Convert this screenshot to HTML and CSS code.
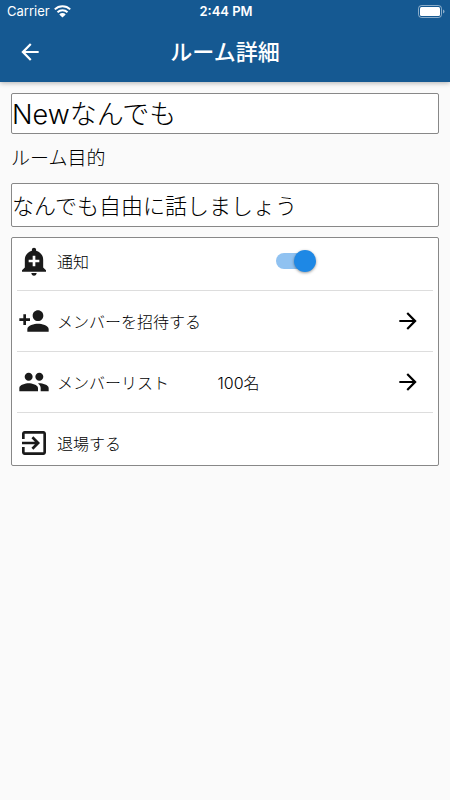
FILE: index.html
```html
<!DOCTYPE html>
<html lang="ja">
<head>
<meta charset="utf-8">
<meta name="viewport" content="width=device-width, initial-scale=1">
<title>ルーム詳細</title>
<link rel="stylesheet" href="styles.css">
</head>
<body>
<header class="top">
  <div class="status">
    <div class="carrier">
      <span>Carrier</span>
      <svg class="wifi" viewBox="0 0 17 13" aria-hidden="true"><path d="M.8 4.4a11 11 0 0 1 15.4 0M3.5 7.2a7.2 7.2 0 0 1 10 0" /><path class="dot" d="M8.500 12.600 5.300 9.400a4.500 4.500 0 0 1 6.400 0z"/></svg>
    </div>
    <span class="time">2:44 PM</span>
    <svg class="battery" viewBox="0 0 27 13" aria-hidden="true"><rect class="shell" x=".5" y=".5" width="23" height="12" rx="3"/><rect x="2" y="2" width="20" height="9" rx="1.500"/><path class="cap" d="M25 4.500v4q1.500-.6 1.500-2t-1.500-2z"/></svg>
  </div>
  <div class="appbar">
    <button class="back" type="button" aria-label="戻る">
      <svg class="arrow" viewBox="0 0 24 24" aria-hidden="true"><path d="M20 11H7.830l5.590-5.590L12 4l-8 8 8 8 1.410-1.410L7.830 13H20v-2z"/></svg>
    </button>
    <h1 class="title">ルーム詳細</h1>
  </div>
</header>
<main class="content">
  <input class="field name" type="text" value="Newなんでも" aria-label="ルーム名">
  <label class="caption" for="purpose">ルーム目的</label>
  <input class="field purpose" id="purpose" type="text" value="なんでも自由に話しましょう">
  <ul class="menu">
    <li class="item first">
      <div class="row">
        <svg class="icon" viewBox="0 0 24 24" aria-hidden="true"><path d="M10.010 21.010c0 1.100.89 1.990 1.990 1.990s1.990-.89 1.990-1.990h-3.980zm8.870-4.190V11c0-3.250-2.250-5.970-5.290-6.690v-.72C13.590 2.710 12.880 2 12 2s-1.590.71-1.590 1.590v.72C7.370 5.030 5.120 7.750 5.120 11v5.820L3 18.940V20h18v-1.060l-2.120-2.120zM16 13.010h-3v3h-2v-3H8V11h3V8h2v3h3v2.010z"/></svg>
        <label for="notify">通知</label>
        <input class="switch" id="notify" type="checkbox" role="switch" checked>
      </div>
    </li>
    <li class="item">
      <button class="row" type="button">
        <svg class="icon" viewBox="0 0 24 24" aria-hidden="true"><path d="M15 12c2.210 0 4-1.790 4-4s-1.790-4-4-4-4 1.790-4 4 1.790 4 4 4zm-9-2V7H4v3H1v2h3v3h2v-3h3v-2H6zm9 4c-2.670 0-8 1.340-8 4v2h16v-2c0-2.660-5.330-4-8-4z"/></svg>
        <span>メンバーを招待する</span>
        <svg class="arrow next" viewBox="0 0 24 24" aria-hidden="true"><path d="M12 4l-1.410 1.410L16.170 11H4v2h12.170l-5.580 5.590L12 20l8-8z"/></svg>
      </button>
    </li>
    <li class="item">
      <button class="row" type="button">
        <svg class="icon" viewBox="0 0 24 24" aria-hidden="true"><path d="M16 11c1.660 0 2.990-1.340 2.990-3S17.660 5 16 5c-1.660 0-3 1.340-3 3s1.340 3 3 3zm-8 0c1.660 0 2.990-1.340 2.990-3S9.660 5 8 5C6.340 5 5 6.340 5 8s1.340 3 3 3zm0 2c-2.330 0-7 1.170-7 3.500V19h14v-2.500c0-2.330-4.670-3.500-7-3.500zm8 0c-.29 0-.62.02-.97.05 1.160.84 1.970 1.970 1.970 3.450V19h6v-2.500c0-2.330-4.670-3.500-7-3.500z"/></svg>
        <span>メンバーリスト</span>
        <span class="count">100名</span>
        <svg class="arrow next" viewBox="0 0 24 24" aria-hidden="true"><path d="M12 4l-1.410 1.410L16.170 11H4v2h12.170l-5.580 5.590L12 20l8-8z"/></svg>
      </button>
    </li>
    <li class="item last">
      <button class="row" type="button">
        <svg class="icon" viewBox="0 0 24 24" aria-hidden="true"><path d="M10.090 15.590L11.500 17l5-5-5-5-1.410 1.410L12.670 11H3v2h9.670l-2.580 2.590zM19 3H5c-1.110 0-2 .9-2 2v4h2V5h14v14H5v-4H3v4c0 1.100.89 2 2 2h14c1.100 0 2-.9 2-2V5c0-1.100-.9-2-2-2z"/></svg>
        <span>退場する</span>
      </button>
    </li>
  </ul>
</main>
</body>
</html>
```
FILE: styles.css
```css
* {
  box-sizing: border-box;
}

body {
  margin: 0;
  background: #fafafa;
  color: #000;
  font-family: Inter, "Noto Sans CJK JP", sans-serif;
  font-size: 16px;
  font-weight: 300;
}

button,
input {
  font: inherit;
  color: inherit;
}

button {
  padding: 0;
  border: 0;
  background: none;
}

svg {
  display: block;
  flex: none;
  fill: currentColor;
}

.top {
  background: #155992;
  color: #fff;
  box-shadow: 0 1px 5px rgba(0, 0, 0, 0.3);
}

.status {
  display: grid;
  grid-template-columns: 1fr auto 1fr;
  align-items: center;
  height: 22px;
  padding: 0 5px 0 7px;
  font-size: 13px;
  font-weight: 400;
}

.carrier {
  display: flex;
  align-items: center;
  gap: 4px;
}

.time {
  font-weight: 600;
}

.wifi {
  width: 17px;
  height: 13px;
  fill: none;
  stroke: #fff;
  stroke-width: 2;
}

.wifi .dot {
  fill: #fff;
  stroke: none;
}

.battery {
  width: 27px;
  height: 13px;
  justify-self: end;
}

.battery .shell {
  fill: none;
  stroke: #fff;
  opacity: 0.5;
}

.battery .cap {
  opacity: 0.5;
}

.appbar {
  display: grid;
  grid-template-columns: 60px 1fr 60px;
  align-items: center;
  height: 60px;
}

.back {
  display: flex;
  justify-content: center;
}

.arrow {
  width: 26px;
  height: 26px;
}

.title {
  margin: 0;
  font-size: 22px;
  font-weight: 500;
  line-height: 32px;
  text-align: center;
}

.content {
  display: flex;
  flex-direction: column;
  padding: 11px;
}

.field {
  width: 100%;
  padding: 0 0 3px;
  border: 1px solid #888;
  border-radius: 2px;
  background: #fff;
}

.name {
  height: 41px;
  font-size: 27px;
}

.caption {
  margin: 11px 0 10px;
  font-size: 19px;
  line-height: 28px;
}

.purpose {
  height: 44px;
  font-size: 22px;
}

.menu {
  margin: 10px 0 0;
  padding: 0 5px;
  border: 1px solid #888;
  border-radius: 2px;
  background: #fff;
  list-style: none;
}

.item {
  padding: 7px 0 8px;
  border-bottom: 1px solid #ddd;
}

.item.first {
  padding: 0 0 7px;
}

.item.last {
  padding-bottom: 0;
  border-bottom: 0;
}

.row {
  display: grid;
  grid-template-columns: 32px 37% 14% 1fr;
  align-items: center;
  column-gap: 7px;
  width: 100%;
  height: 45px;
  padding-left: 1px;
  text-align: left;
  white-space: nowrap;
}

.icon {
  width: 32px;
  height: 32px;
  color: #1a1a1a;
}

.count {
  grid-column: 3;
}

.next {
  grid-column: 4;
  justify-self: end;
  margin-right: 12px;
}

.switch {
  position: relative;
  grid-column: 3 / 5;
  width: 40px;
  height: 22px;
  margin: 0 0 0 58px;
  appearance: none;
}

.switch::before,
.switch::after {
  position: absolute;
  content: "";
}

.switch::before {
  inset: 3px 3px 3px 0;
  border-radius: 8px;
  background: #90c2f1;
}

.switch::after {
  top: 0;
  left: 0;
  width: 22px;
  height: 22px;
  border-radius: 50%;
  background: #fafafa;
  box-shadow: 0 1px 3px rgba(0, 0, 0, 0.4);
}

.switch:checked::after {
  right: 0;
  left: auto;
  background: #1e88e5;
}
```
